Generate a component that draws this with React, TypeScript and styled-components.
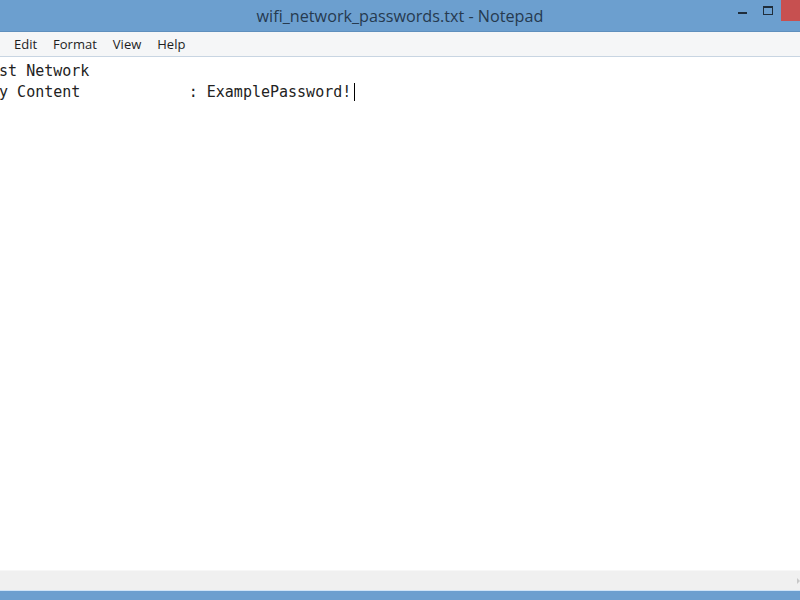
import React from 'react'
import styled, { createGlobalStyle } from 'styled-components'

const GlobalStyle = createGlobalStyle`
  html, body {
    margin: 0;
    padding: 0;
    width: 800px;
    height: 600px;
    overflow: hidden;
    background: #ffffff;
  }
`

const Window = styled.div`
  width: 852px;
  height: 600px;
  margin-left: -26px;
  display: flex;
  flex-direction: column;
  background-color: #6c9fcf;
`

const TitleBar = styled.div`
  height: 32px;
  flex-shrink: 0;
  position: relative;
  display: flex;
  align-items: center;
  justify-content: center;
  background-color: #6c9fcf;
  border-bottom: 1px solid #5f8fbd;
  box-sizing: border-box;
`

const Title = styled.div`
  font-family: 'Open Sans', 'Noto Sans', sans-serif;
  font-size: 16.2px;
  color: #263a4f;
`

const Controls = styled.div`
  position: absolute;
  top: 0;
  right: 0;
  display: flex;
  align-items: flex-start;
`

const ControlButton = styled.div<{ close?: boolean }>`
  width: ${(p) => (p.close ? '45px' : '26px')};
  height: 21px;
  display: flex;
  align-items: center;
  justify-content: center;
  background-color: ${(p) => (p.close ? '#c75050' : 'transparent')};
`

const MinimizeGlyph = styled.div`
  width: 9px;
  height: 2px;
  margin-top: 5px;
  background-color: #1f2d3b;
`

const MaximizeGlyph = styled.div`
  width: 8px;
  height: 6px;
  border: 1px solid #1f2d3b;
  border-top-width: 2px;
`

const MenuBar = styled.div`
  height: 24px;
  flex-shrink: 0;
  display: flex;
  align-items: center;
  background-color: #f5f6f7;
  border-bottom: 1px solid #c8d5e2;
  padding-left: 33px;
`

const MenuItem = styled.div`
  font-family: 'Open Sans', 'Noto Sans', sans-serif;
  font-size: 13px;
  color: #1e1e1e;
  padding: 0 8px;
  &:first-child {
    padding-left: 7px;
  }
`

const Editor = styled.div`
  flex: 1;
  background-color: #ffffff;
  padding: 4px 0 0 7px;
  font-family: 'DejaVu Sans Mono', 'Liberation Mono', monospace;
  font-size: 15px;
  line-height: 21px;
  color: #222222;
  white-space: pre;
`

const Caret = styled.span`
  display: inline-block;
  width: 1px;
  height: 18px;
  margin-left: 3px;
  vertical-align: -4px;
  background-color: #000000;
`

const HScroll = styled.div`
  height: 19px;
  flex-shrink: 0;
  display: flex;
  align-items: center;
  justify-content: flex-end;
  padding-right: 26px;
  background-color: #f0f0f0;
  border-top: 1px solid #f7f7f7;
`

const ScrollArrow = styled.div`
  width: 0;
  height: 0;
  border-top: 3px solid transparent;
  border-bottom: 3px solid transparent;
  border-left: 3px solid #c8c8c8;
`

const BottomFrame = styled.div`
  flex-shrink: 0;
  height: 9px;
  border-top: 1px solid #cfe4f7;
  background-color: #6c9fcf;
`

export default function App() {
  return (
    <>
      <GlobalStyle />
      <Window>
        <TitleBar>
          <Title>wifi_network_passwords.txt - Notepad</Title>
          <Controls>
            <ControlButton>
              <MinimizeGlyph />
            </ControlButton>
            <ControlButton>
              <MaximizeGlyph />
            </ControlButton>
            <ControlButton close />
          </Controls>
        </TitleBar>
        <MenuBar>
          <MenuItem>Edit</MenuItem>
          <MenuItem>Format</MenuItem>
          <MenuItem>View</MenuItem>
          <MenuItem>Help</MenuItem>
        </MenuBar>
        <Editor>
          {'Test Network\n'}
          {'Key Content            : ExamplePassword!'}
          <Caret />
        </Editor>
        <HScroll>
          <ScrollArrow />
        </HScroll>
        <BottomFrame />
      </Window>
    </>
  )
}
